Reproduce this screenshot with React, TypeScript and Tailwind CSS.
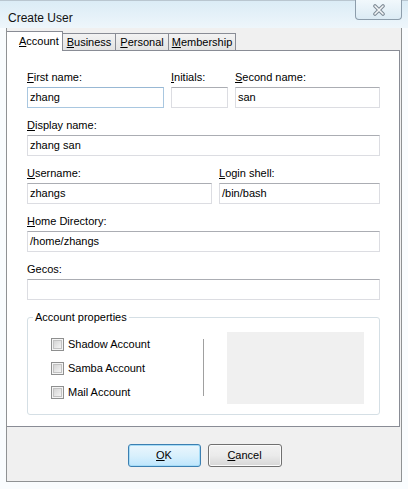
import React from 'react';

const font = "font-['Liberation_Sans',Arial,sans-serif]";

function Mn({ c }: { c: string }) {
    return <span className="underline underline-offset-[1px]">{c}</span>;
}

function Field({ label, value, width, focused }: { label: React.ReactNode; value?: string; width: string; focused?: boolean }) {
    return (
        <div className={`flex flex-col ${width}`}>
            <div className="h-[13px] leading-[13px] text-[11px] text-black whitespace-nowrap">{label}</div>
            <div
                className={`mt-[3px] h-[21px] border bg-white pl-[2px] flex items-center text-[11px] text-black ${
                    focused ? 'border-[#a9c7e0] border-t-[#98b8d4]' : 'border-[#dcdde2] border-t-[#abadb3]'
                }`}
            >
                {value}
            </div>
        </div>
    );
}

function CheckRow({ label }: { label: string }) {
    return (
        <div className="h-[24px] flex items-center">
            <div className="w-[13px] h-[13px] border border-[#8e8f8f] bg-[#f4f4f4] p-[1px]">
                <div className="w-full h-full border border-[#c2c2c2] bg-gradient-to-br from-[#d4d4d4] to-[#f4f4f4]" />
            </div>
            <span className="ml-[4px] text-[11px] leading-[13px] text-black">{label}</span>
        </div>
    );
}

export default function App() {
    return (
        <div className={`w-[408px] h-[489px] bg-[#f9fcfe] overflow-hidden relative ${font}`}>
            {/* Title bar */}
            <div className="h-[28px] pt-[4px] pl-[8px] bg-gradient-to-b from-[#dbecf6] to-[#eef6fb] border-t border-[#b9c6d0]">
                <span className="text-[12px] leading-[16px] text-[#111]">Create User</span>
            </div>
            <div className="absolute left-[355px] top-0 w-[47px] h-[20px] rounded-b-[4px] border border-t-0 border-[#8d9dab] bg-gradient-to-b from-[#f1f8fc] to-[#dcebf4] flex items-center justify-center">
                <svg width="14" height="12" viewBox="0 0 14 12">
                    <path d="M3 2 L11 10 M11 2 L3 10" stroke="#7d8a95" strokeWidth="3.6" strokeLinecap="round" fill="none" />
                    <path d="M3 2 L11 10 M11 2 L3 10" stroke="#f4f6f8" strokeWidth="1.6" strokeLinecap="round" fill="none" />
                </svg>
            </div>

            {/* Client area */}
            <div className="ml-[6px] w-[396px] h-[454px] bg-[#f0f0f0] border-x border-b border-[#8f9294] pt-[3px] flex flex-col">
                {/* Tabs */}
                <div className="h-[19px] flex items-end text-[11px] text-black">
                    <div className="relative z-10 -mb-px h-[20px] w-[56px] bg-white border-t border-r border-[#898c95] pl-[12px] pt-[3px] leading-[13px]">
                        <Mn c="A" />ccount
                    </div>
                    <div className="h-[17px] w-[53px] border-t border-r border-[#898c95] bg-gradient-to-b from-[#f3f3f3] to-[#e3e3e3] flex items-center justify-center leading-[13px]">
                        <span><Mn c="B" />usiness</span>
                    </div>
                    <div className="h-[17px] w-[53px] border-t border-r border-[#898c95] bg-gradient-to-b from-[#f3f3f3] to-[#e3e3e3] flex items-center justify-center leading-[13px]">
                        <span><Mn c="P" />ersonal</span>
                    </div>
                    <div className="h-[17px] w-[67px] border-t border-r border-[#898c95] bg-gradient-to-b from-[#f3f3f3] to-[#e3e3e3] flex items-center justify-center leading-[13px]">
                        <span><Mn c="M" />embership</span>
                    </div>
                </div>

                {/* Tab panel */}
                <div className="w-[393px] h-[377px] bg-white border-t border-r border-b border-[#898c95] pl-[20px] pt-[20px] flex flex-col gap-[11px]">
                    <div className="flex gap-[7px] w-[353px]">
                        <Field width="w-[137px]" label={<><Mn c="F" />irst name:</>} value="zhang" focused />
                        <Field width="w-[57px]" label={<><Mn c="I" />nitials:</>} />
                        <Field width="w-[145px]" label={<><Mn c="S" />econd name:</>} value="san" />
                    </div>
                    <Field width="w-[353px]" label={<><Mn c="D" />isplay name:</>} value="zhang san" />
                    <div className="flex gap-[7px] w-[353px]">
                        <Field width="w-[185px]" label={<><Mn c="U" />sername:</>} value="zhangs" />
                        <Field width="w-[161px]" label={<><Mn c="L" />ogin shell:</>} value="/bin/bash" />
                    </div>
                    <Field width="w-[353px]" label={<><Mn c="H" />ome Directory:</>} value="/home/zhangs" />
                    <Field width="w-[353px]" label="Gecos:" />

                    {/* Group box */}
                    <div className="relative mt-[6px] w-[353px] h-[98px] border border-[#d5dfe5] rounded-[3px] pt-[14px] pb-[10px] flex">
                        <span className="absolute left-[5px] top-[-7px] px-[2px] bg-white text-[11px] leading-[13px] text-black">
                            Account properties
                        </span>
                        <div className="ml-[23px] w-[152px] flex flex-col">
                            <CheckRow label="Shadow Account" />
                            <CheckRow label="Samba Account" />
                            <CheckRow label="Mail Account" />
                        </div>
                        <div className="mt-[7px] w-px h-[57px] bg-[#a0a0a0]" />
                        <div className="ml-auto mr-[15px] w-[137px] h-[72px] bg-[#f0f0f0]" />
                    </div>
                </div>

                {/* Buttons */}
                <div className="flex-1 flex justify-center gap-[7px] pt-[17px] pl-[1px]">
                    <div className="w-[73px] h-[23px] rounded-[3px] border border-[#3c7fb1] bg-gradient-to-b from-[#eaf6fd] via-[#d9f0fc] to-[#bee6fd] shadow-[inset_0_0_0_1px_#a6dcf7] flex items-center justify-center text-[11px] text-black">
                        <span><Mn c="O" />K</span>
                    </div>
                    <div className="w-[74px] h-[23px] rounded-[3px] border border-[#707070] bg-gradient-to-b from-[#f2f2f2] via-[#ebebeb] to-[#d6d6d6] shadow-[inset_0_0_0_1px_#fbfbfb] flex items-center justify-center text-[11px] text-black">
                        <span><Mn c="C" />ancel</span>
                    </div>
                </div>
            </div>
        </div>
    );
}
